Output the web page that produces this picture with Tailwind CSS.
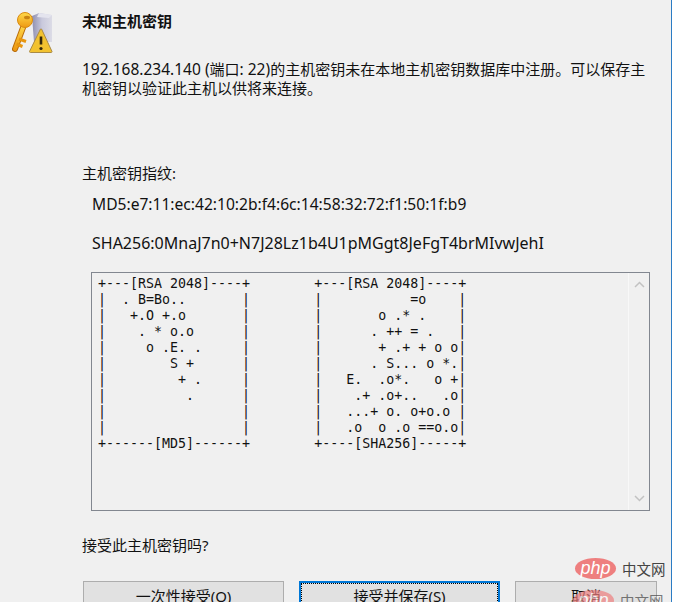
<!DOCTYPE html>
<html lang="zh-CN">
<head>
    <meta charset="UTF-8">
    <title>未知主机密钥</title>
    <script src="https://cdn.jsdelivr.net/npm/@tailwindcss/browser@4"></script>
</head>
<body class="bg-white">
    <div class="relative w-[672px] h-[602px] overflow-hidden bg-[#f0f0f0] border-r border-[#2b7cc4] font-['Noto_Sans','Noto_Sans_CJK_SC',sans-serif] text-[15px] text-[#111]">
        <!-- key + server + warning icon -->
        <svg class="absolute left-[12px] top-[12px] w-[42px] h-[42px]" viewBox="0 0 42 42">
            <defs>
                <linearGradient id="srv" x1="0" y1="0" x2="1" y2="0">
                    <stop offset="0" stop-color="#8f8fb0"/>
                    <stop offset="0.5" stop-color="#c9c9dc"/>
                    <stop offset="1" stop-color="#dcdce6"/>
                </linearGradient>
                <linearGradient id="keyg" x1="0" y1="0" x2="0" y2="1">
                    <stop offset="0" stop-color="#ffd94a"/>
                    <stop offset="1" stop-color="#ee9a12"/>
                </linearGradient>
            </defs>
            <path d="M20 4l7-3 13 2v27H22z" fill="url(#srv)"/>
            <path d="M27 1l13 2-3 3-12-1z" fill="#e4e4ee"/>
            <path d="M12 13L3 37" stroke="#b86a08" stroke-width="6" stroke-linecap="round"/>
            <path d="M12 13L3 37" stroke="url(#keyg)" stroke-width="4" stroke-linecap="round"/>
            <path d="M7 27l7 2.500M4.500 32l6 2.500" stroke="#e8960f" stroke-width="3"/>
            <circle cx="13" cy="8" r="7.500" fill="url(#keyg)" stroke="#d98a10" stroke-width="1"/>
            <ellipse cx="15" cy="5.500" rx="3" ry="1.800" fill="#c98412"/>
            <path d="M28 18L17.500 39.500a1 1 0 0 0 1 1H39a1 1 0 0 0 1-1L30 18a1 1 0 0 0-2 0z" fill="#f2c230" stroke="#a98a45" stroke-width="1"/>
            <path d="M29 24.500v8" stroke="#33270a" stroke-width="2.600"/>
            <circle cx="29" cy="36.500" r="1.600" fill="#33270a"/>
        </svg>

        <div class="pl-[82px]">
            <h1 class="pt-[11px] leading-[20px] font-bold">未知主机密钥</h1>
            <p class="mt-[29px] leading-[19px] w-[566px]"><span class="text-[15.500px]">192.168.234.140 (</span>端口<span class="text-[15.500px]">: 22)</span>的主机密钥未在本地主机密钥数据库中注册。可以保存主机密钥以验证此主机以供将来连接。</p>
            <p class="mt-[65px] leading-[20px]">主机密钥指纹:</p>
            <p class="mt-[11px] ml-[10px] leading-[20px] text-[15.600px]">MD5:e7:11:ec:42:10:2b:f4:6c:14:58:32:72:f1:50:1f:b9</p>
            <p class="mt-[19px] ml-[10px] leading-[20px] text-[16px]">SHA256:0MnaJ7n0+N7J28Lz1b4U1pMGgt8JeFgT4brMIvwJehI</p>

            <div class="mt-[19px] ml-[9px] w-[559px] h-[239px] flex border border-[#828790]">
                <pre class="flex-1 pl-[6px] pt-[3px] font-['DejaVu_Sans_Mono',monospace] text-[13.3px] leading-[16px] text-[#111]">+---[RSA 2048]----+        +---[RSA 2048]----+
|  . B=Bo..       |        |           =o    |
|   +.O +.o       |        |       o .* .    |
|    . * o.o      |        |      . ++ = .   |
|     o .E. .     |        |       + .+ + o o|
|        S +      |        |      . S... o *.|
|         + .     |        |   E.  .o*.   o +|
|          .      |        |    .+ .o+..   .o|
|                 |        |   ...+ o. o+o.o |
|                 |        |   .o  o .o ==o.o|
+------[MD5]------+        +----[SHA256]-----+</pre>
                <div class="w-[21px] flex flex-col justify-between items-center py-[8px] border-l border-[#f8f8f8]">
                    <svg class="w-[11px] h-[7px]" viewBox="0 0 11 7" fill="none" stroke="#c2c2c2" stroke-width="1.500"><path d="M1 6l4.500-4.500L10 6"/></svg>
                    <svg class="w-[11px] h-[7px]" viewBox="0 0 11 7" fill="none" stroke="#c2c2c2" stroke-width="1.500"><path d="M1 1l4.500 4.500L10 1"/></svg>
                </div>
            </div>

            <p class="mt-[24px] leading-[20px]">接受此主机密钥吗?</p>

            <div class="mt-[26px] ml-px flex gap-[15px]">
                <button class="w-[201px] h-[32px] shrink-0 pb-px bg-[#e1e1e1] border border-[#adadad]">一次性接受(O)</button>
                <button class="w-[201px] h-[32px] shrink-0 pb-px bg-[#e1e1e1] border-2 border-[#0078d7] outline-1 outline-dotted outline-black -outline-offset-3">接受并保存(S)</button>
                <button class="w-[142px] h-[32px] shrink-0 pb-px bg-[#e1e1e1] border border-[#adadad]">取消</button>
            </div>
        </div>

        <!-- watermarks over the content -->
        <div class="absolute left-[575px] top-[558px] flex items-center gap-[6px]">
            <div class="w-[41px] h-[21px] rounded-[50%] bg-[#ee7f7f] text-white text-[18px] leading-[20px] italic text-center font-['Liberation_Sans',sans-serif]">php</div>
            <span class="text-[14.500px] leading-[20px] text-[#444]">中文网</span>
        </div>
        <div class="absolute left-[573px] top-[590px] flex items-center gap-[6px] opacity-70">
            <div class="w-[41px] h-[21px] rounded-[50%] bg-[#ee7f7f] text-white text-[18px] leading-[20px] italic text-center font-['Liberation_Sans',sans-serif]">php</div>
            <span class="text-[14.500px] leading-[20px] text-[#444]">中文网</span>
        </div>
    </div>
</body>
</html>
